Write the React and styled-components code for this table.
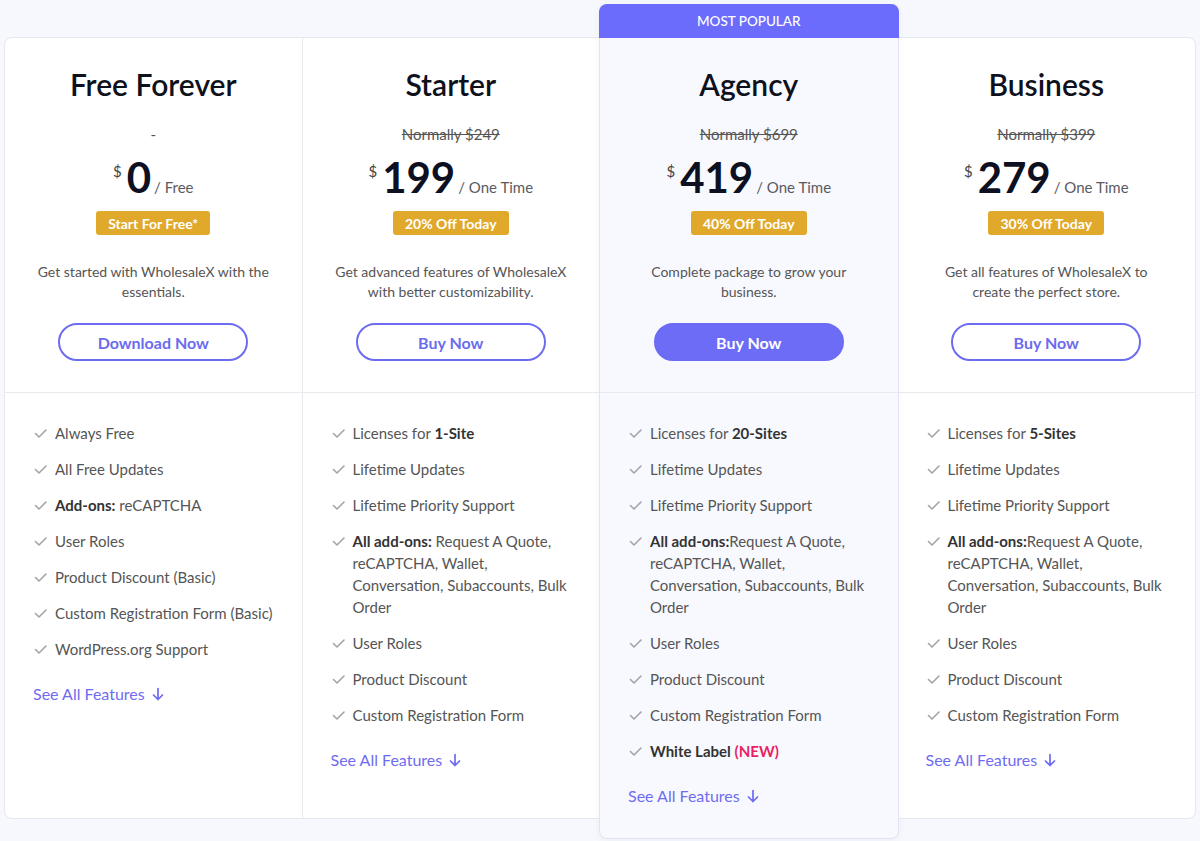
import styled, { createGlobalStyle } from "styled-components";

// feature parts: plain string, { b } for bold, { tag } for highlighted label
const plans = [
  {
    name: "Free Forever",
    old: "-",
    price: "0",
    unit: "Free",
    badge: "Start For Free*",
    desc: "Get started with WholesaleX with the essentials.",
    cta: "Download Now",
    features: [
      ["Always Free"],
      ["All Free Updates"],
      [{ b: "Add-ons:" }, " reCAPTCHA"],
      ["User Roles"],
      ["Product Discount (Basic)"],
      ["Custom Registration Form (Basic)"],
      ["WordPress.org Support"],
    ],
  },
  {
    name: "Starter",
    old: "Normally $249",
    price: "199",
    unit: "One Time",
    badge: "20% Off Today",
    desc: "Get advanced features of WholesaleX with better customizability.",
    cta: "Buy Now",
    features: [
      ["Licenses for ", { b: "1-Site" }],
      ["Lifetime Updates"],
      ["Lifetime Priority Support"],
      [
        { b: "All add-ons:" },
        " Request A Quote, reCAPTCHA, Wallet, Conversation, Subaccounts, Bulk Order",
      ],
      ["User Roles"],
      ["Product Discount"],
      ["Custom Registration Form"],
    ],
  },
  {
    name: "Agency",
    popular: true,
    old: "Normally $699",
    price: "419",
    unit: "One Time",
    badge: "40% Off Today",
    desc: "Complete package to grow your business.",
    cta: "Buy Now",
    features: [
      ["Licenses for ", { b: "20-Sites" }],
      ["Lifetime Updates"],
      ["Lifetime Priority Support"],
      [
        { b: "All add-ons:" },
        "Request A Quote, reCAPTCHA, Wallet, Conversation, Subaccounts, Bulk Order",
      ],
      ["User Roles"],
      ["Product Discount"],
      ["Custom Registration Form"],
      [{ b: "White Label" }, " ", { tag: "(NEW)" }],
    ],
  },
  {
    name: "Business",
    old: "Normally $399",
    price: "279",
    unit: "One Time",
    badge: "30% Off Today",
    desc: "Get all features of WholesaleX to create the perfect store.",
    cta: "Buy Now",
    features: [
      ["Licenses for ", { b: "5-Sites" }],
      ["Lifetime Updates"],
      ["Lifetime Priority Support"],
      [
        { b: "All add-ons:" },
        "Request A Quote, reCAPTCHA, Wallet, Conversation, Subaccounts, Bulk Order",
      ],
      ["User Roles"],
      ["Product Discount"],
      ["Custom Registration Form"],
    ],
  },
];

const Check = () => (
  <svg width="13" height="22" viewBox="0 0 13 22" fill="none">
    <polyline
      points="1.5,11.5 5,15 12,8"
      stroke="#a3a3a8"
      strokeWidth="1.6"
      strokeLinecap="round"
      strokeLinejoin="round"
    />
  </svg>
);

const ArrowDown = () => (
  <svg width="12" height="14" viewBox="0 0 12 14" fill="none">
    <path
      d="M6 1.5v11M1.5 8l4.5 4.5L10.5 8"
      stroke="#6b6bf2"
      strokeWidth="1.7"
      strokeLinecap="round"
      strokeLinejoin="round"
    />
  </svg>
);

const Part = ({ part }) => {
  if (typeof part === "string") return part;
  if (part.tag) return <NewTag>{part.tag}</NewTag>;
  return <b>{part.b}</b>;
};

const App = () => {
  return (
    <Page>
      <GlobalStyle />
      <Board>
        {plans.map((p) => (
          <Column key={p.name} $popular={p.popular}>
            {p.popular && <Ribbon>MOST POPULAR</Ribbon>}
            <Top>
              <Title>{p.name}</Title>
              <OldPrice $strike={p.old !== "-"}>{p.old}</OldPrice>
              <PriceRow>
                <Currency>$</Currency>
                <Amount>{p.price}</Amount>
                <Unit>/ {p.unit}</Unit>
              </PriceRow>
              <Badge>{p.badge}</Badge>
              <Desc>{p.desc}</Desc>
              <Cta $filled={p.popular}>{p.cta}</Cta>
            </Top>
            <Features>
              {p.features.map((f, i) => (
                <Feature key={i}>
                  <Check />
                  <span>
                    {f.map((part, j) => (
                      <Part key={j} part={part} />
                    ))}
                  </span>
                </Feature>
              ))}
              <SeeAll>
                See All Features <ArrowDown />
              </SeeAll>
            </Features>
          </Column>
        ))}
      </Board>
    </Page>
  );
};
export default App;

const GlobalStyle = createGlobalStyle`
  body {
    margin: 0;
    background: #f7f8fd;
    font-family: "Lato", "Liberation Sans", sans-serif;
  }
`;

const Page = styled.div`
  padding: 37px 4px 22px;
  min-height: 841px;
  box-sizing: border-box;
`;

const Board = styled.div`
  display: grid;
  grid-template-columns: repeat(4, 1fr);
  background: #fff;
  border: 1px solid #e7e8ef;
  border-radius: 8px;
`;

const Column = styled.div`
  display: flex;
  flex-direction: column;
  border-right: 1px solid #e9eaf0;
  &:last-child {
    border-right: none;
  }
  ${({ $popular }) =>
    $popular &&
    `
    position: relative;
    z-index: 1;
    margin: -34px -1px -21px -1px;
    background: #f8f9fe;
    border: 1px solid #e1e3f4;
    border-radius: 8px;
    box-shadow: 0 2px 6px rgba(90, 95, 160, 0.06);
  `}
`;

const Ribbon = styled.div`
  height: 34px;
  margin: -1px -1px 0;
  background: #6c6cfc;
  color: #fff;
  font-size: 13.5px;
  font-weight: 500;
  display: flex;
  align-items: center;
  justify-content: center;
  border-radius: 8px 8px 0 0;
`;

const Top = styled.div`
  display: flex;
  flex-direction: column;
  align-items: center;
  padding: 28px 30px 31px;
  border-bottom: 1px solid #e9eaf0;
  text-align: center;
`;

const Title = styled.h2`
  margin: 0;
  font-size: 30px;
  line-height: 36px;
  font-weight: 600;
  color: #0e111c;
`;

const OldPrice = styled.div`
  margin-top: 21px;
  font-size: 15px;
  line-height: 22px;
  color: #555;
  text-decoration: ${({ $strike }) => ($strike ? "line-through" : "none")};
`;

const PriceRow = styled.div`
  margin-top: 7px;
  height: 50px;
  display: flex;
  align-items: baseline;
  justify-content: center;
`;

const Currency = styled.span`
  align-self: flex-start;
  margin-top: 9px;
  font-size: 15px;
  line-height: 20px;
  color: #444;
  margin-right: 5px;
`;

const Amount = styled.span`
  font-size: 42px;
  line-height: 50px;
  font-weight: 700;
  color: #0d1020;
  margin-right: 3px;
`;

const Unit = styled.span`
  font-size: 15px;
  color: #5a5a5f;
`;

const Badge = styled.div`
  margin-top: 9px;
  height: 24px;
  padding: 0 12px;
  display: flex;
  align-items: center;
  background: #e0a92b;
  color: #fff;
  font-size: 14px;
  font-weight: 700;
  border-radius: 3px;
`;

const Desc = styled.p`
  margin: 27px 0 0;
  font-size: 14px;
  line-height: 20px;
  color: #555;
  max-width: 238px;
`;

const Cta = styled.button`
  margin-top: 21px;
  width: 190px;
  height: 38px;
  border-radius: 20px;
  border: 2px solid #6c6cf2;
  background: ${({ $filled }) => ($filled ? "#6c6cf6" : "transparent")};
  color: ${({ $filled }) => ($filled ? "#fff" : "#6b6bf0")};
  font-family: inherit;
  font-size: 16px;
  font-weight: 700;
  cursor: pointer;
`;

const Features = styled.div`
  display: flex;
  flex-direction: column;
  gap: 14px;
  padding: 29px 26px 31px 29px;
`;

const Feature = styled.div`
  display: flex;
  align-items: flex-start;
  gap: 8px;
  font-size: 15px;
  line-height: 22px;
  color: #555;
  svg {
    flex: none;
  }
  b {
    color: #333;
    font-weight: 700;
  }
`;

const NewTag = styled.b`
  && {
    color: #ea1e63;
  }
`;

const SeeAll = styled.a`
  margin-top: 9px;
  display: flex;
  align-items: center;
  gap: 7px;
  margin-left: -1px;
  font-size: 16px;
  line-height: 22px;
  color: #6f6cf0;
  cursor: pointer;
`;
